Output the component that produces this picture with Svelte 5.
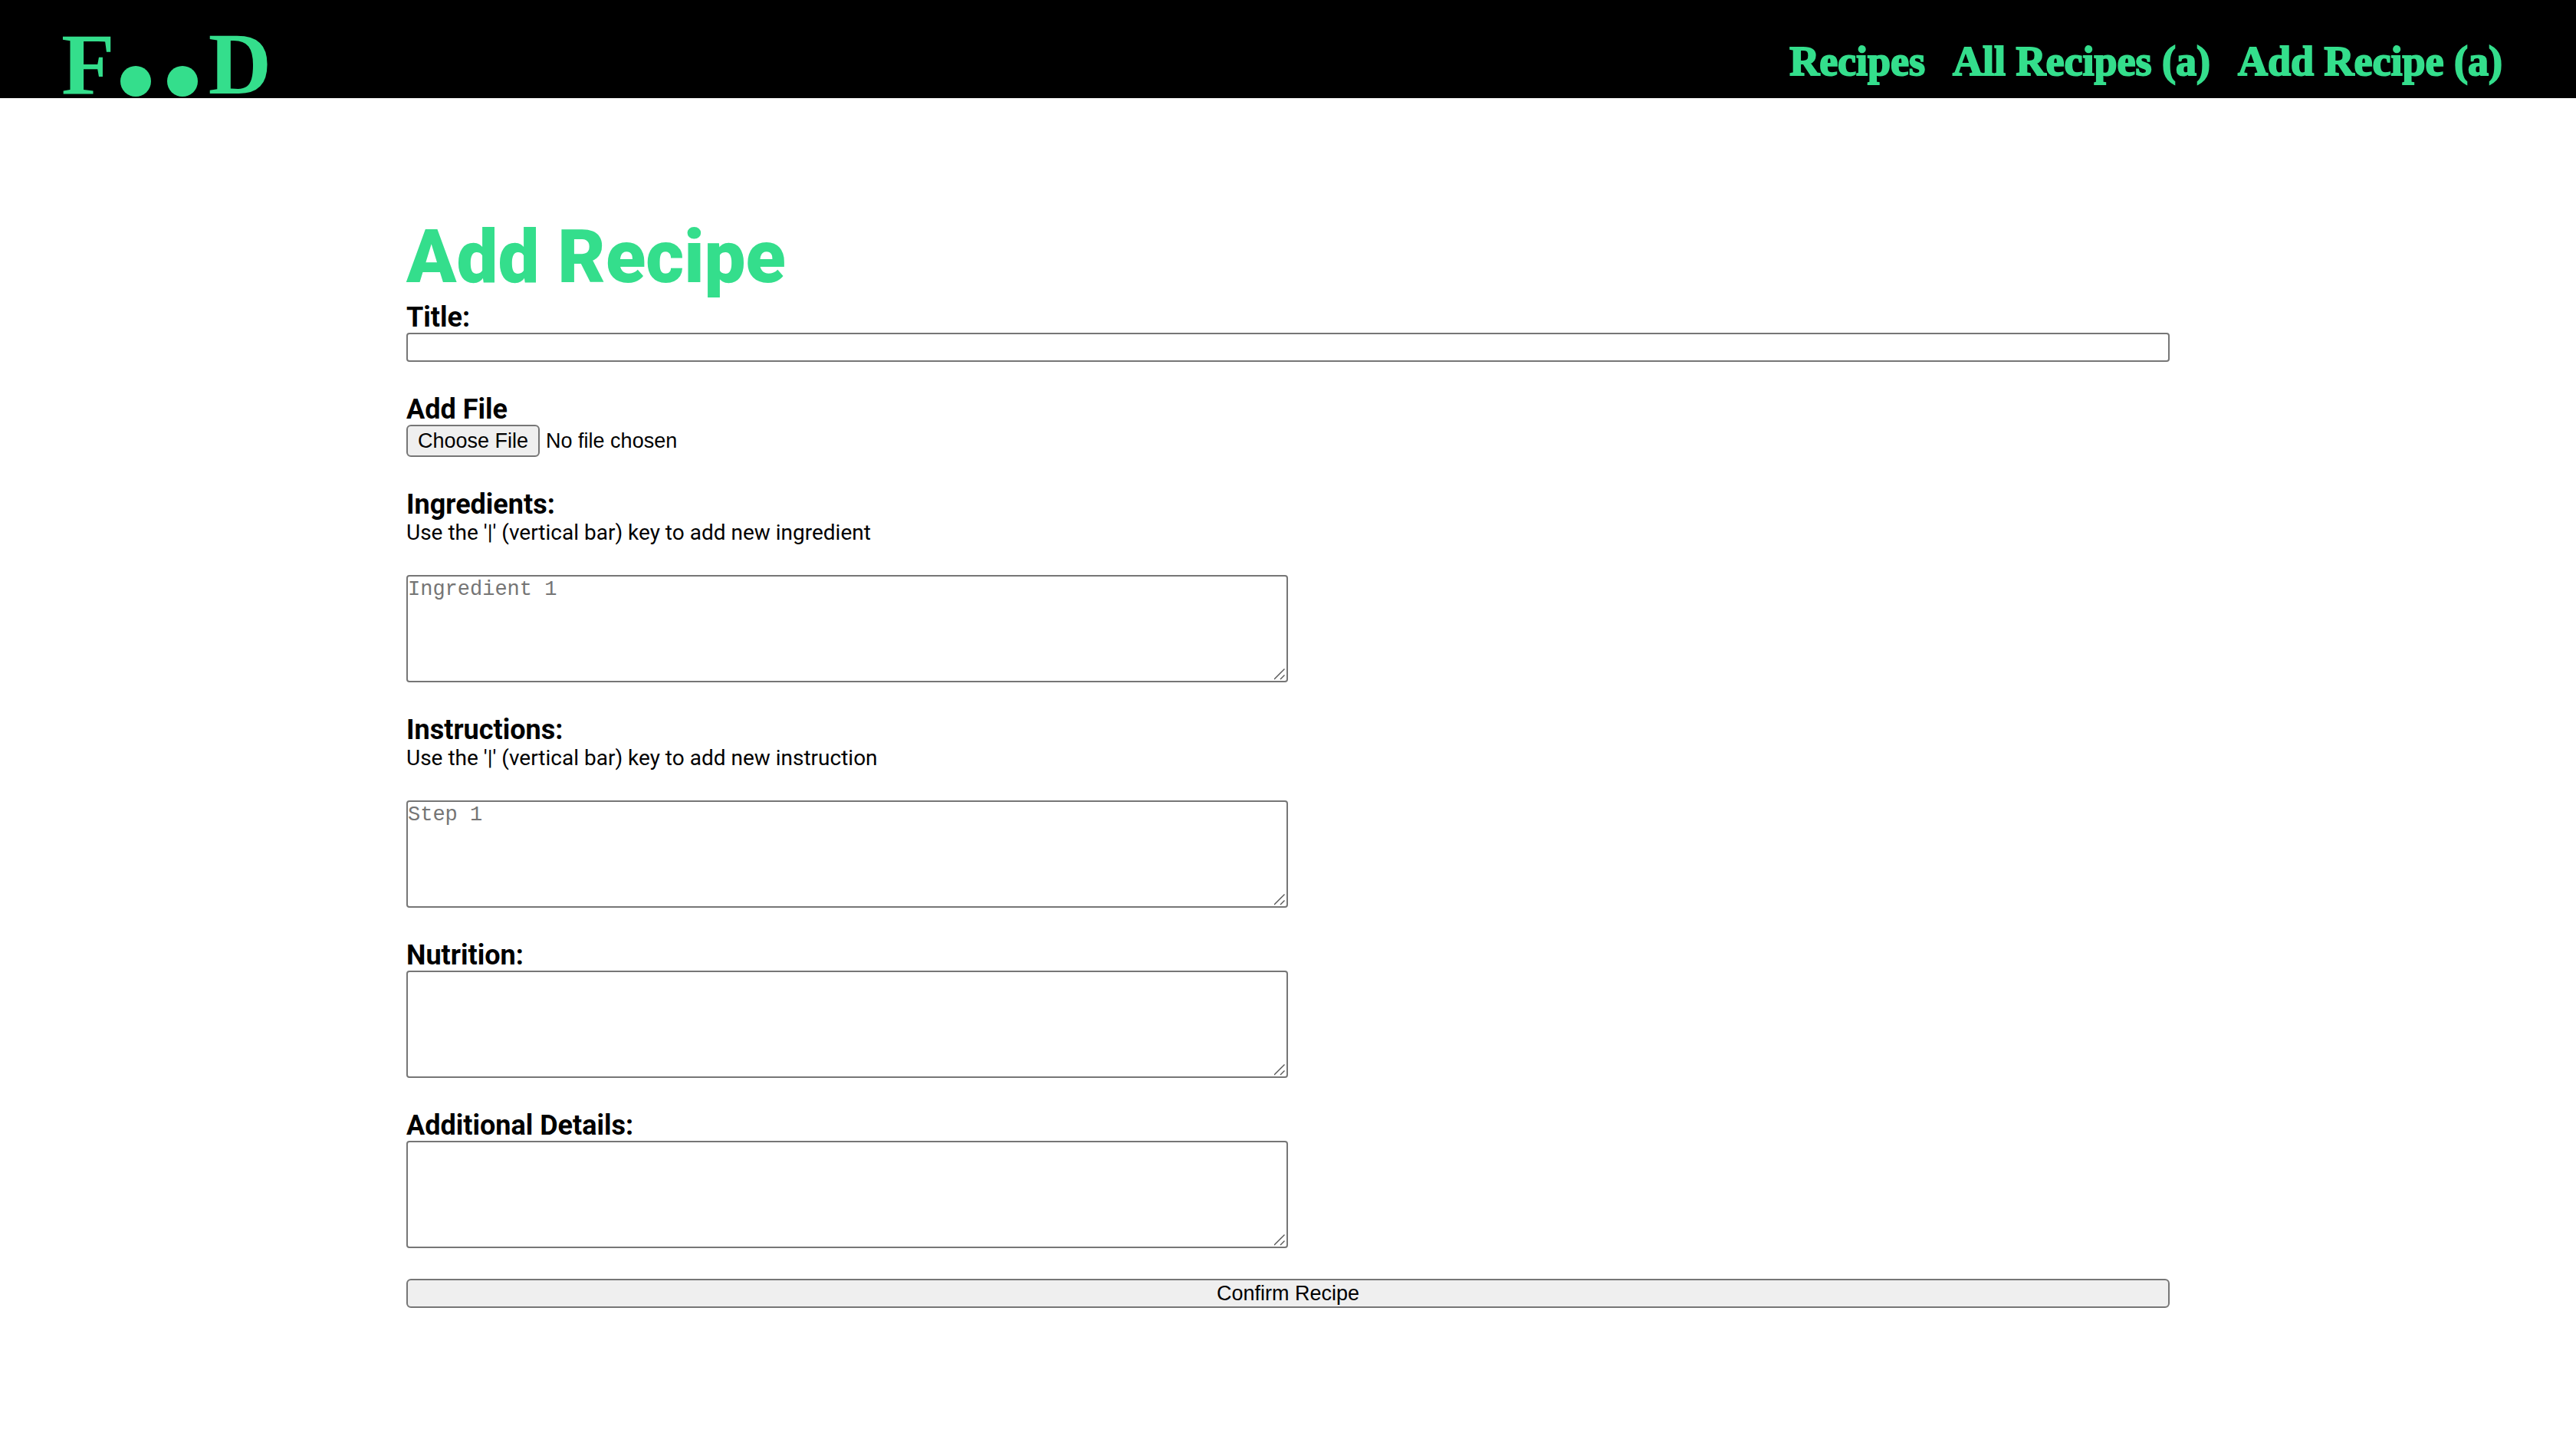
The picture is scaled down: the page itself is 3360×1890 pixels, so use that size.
<script>
  const links = ['Recipes', 'All Recipes (a)', 'Add Recipe (a)'];

  const areas = [
    {
      id: 'ingredients',
      label: 'Ingredients:',
      hint: "Use the '|' (vertical bar) key to add new ingredient",
      placeholder: 'Ingredient 1'
    },
    {
      id: 'instructions',
      label: 'Instructions:',
      hint: "Use the '|' (vertical bar) key to add new instruction",
      placeholder: 'Step 1'
    },
    { id: 'nutrition', label: 'Nutrition:' },
    { id: 'details', label: 'Additional Details:' }
  ];
</script>

<header>
  <a class="logo" href="#home" aria-label="Food">
    <span>F</span>
    <i class="dot"></i>
    <i class="dot"></i>
    <span>D</span>
  </a>
  <nav>
    {#each links as link}
      <a href="#recipes">{link}</a>
    {/each}
  </nav>
</header>

<main>
  <h1>Add Recipe</h1>
  <form onsubmit={(event) => event.preventDefault()}>
    <div class="field">
      <label for="title">Title:</label>
      <input id="title" class="text" type="text" />
    </div>

    <div class="field">
      <label for="file">Add File</label>
      <input id="file" class="file" type="file" />
    </div>

    {#each areas as area}
      <div class="field">
        <label for={area.id}>{area.label}</label>
        {#if area.hint}
          <p>{area.hint}</p>
        {/if}
        <div class="area">
          <textarea id={area.id} placeholder={area.placeholder}></textarea>
          <svg class="grip" viewBox="0 0 16 16" aria-hidden="true">
            <path d="M0 14 13.5 0.5M8 14 13.5 8.5" />
          </svg>
        </div>
      </div>
    {/each}

    <button type="submit">Confirm Recipe</button>
  </form>
</main>

<style>
  :global(body) {
    margin: 0;
    background: #fff;
    color: #000;
    font-family: Roboto, sans-serif;
  }

  header {
    display: flex;
    justify-content: space-between;
    align-items: flex-start;
    padding: 42px 96px 2px 80px;
    background: #000;
    font-family: 'Liberation Serif', serif;
    font-weight: 700;
  }

  header a {
    color: #34de8c;
    text-decoration: none;
  }

  .logo {
    display: flex;
    align-items: flex-end;
    font-size: 114px;
    line-height: 84px;
  }

  .dot {
    width: 40px;
    height: 40px;
    margin: 0 14px 0 7px;
    border-radius: 50%;
    background: #34de8c;
  }

  nav {
    display: flex;
    gap: 36px;
    font-size: 54px;
    line-height: 76px;
    -webkit-text-stroke: 2px #34de8c;
  }

  main {
    max-width: 2300px;
    margin: 0 auto;
    padding: 150px 40px;
  }

  h1 {
    margin: 0;
    color: #34de8c;
    font-size: 96px;
    line-height: 114px;
    font-weight: 900;
  }

  form {
    display: flex;
    flex-direction: column;
    gap: 40px;
  }

  .field {
    display: flex;
    flex-direction: column;
    align-items: flex-start;
  }

  label {
    padding-top: 2px;
    font-size: 36px;
    line-height: 40px;
    font-weight: 700;
  }

  p {
    margin: 0 0 38px;
    font-size: 28px;
    line-height: 34px;
  }

  input,
  button,
  textarea {
    box-sizing: border-box;
    margin: 0;
    color: #000;
    font-family: 'Liberation Sans', sans-serif;
    font-size: 27px;
  }

  .text {
    width: 100%;
    height: 38px;
    padding: 2px 4px;
    border: 2px solid #767676;
    border-radius: 4px;
    background: #fff;
  }

  .file {
    width: 100%;
    height: 42px;
    line-height: 30px;
  }

  .file::file-selector-button {
    box-sizing: border-box;
    height: 42px;
    margin: 0 8px 0 0;
    padding: 0 13px;
    border: 2px solid #767676;
    border-radius: 6px;
    background: #efefef;
    color: #000;
    font: inherit;
  }

  .area {
    position: relative;
    width: 50%;
  }

  textarea {
    display: block;
    width: 100%;
    height: 140px;
    padding: 2px 0;
    border: 2px solid #767676;
    border-radius: 4px;
    background: #fff;
    font-family: 'Liberation Mono', monospace;
    resize: none;
  }

  textarea::placeholder {
    color: #757575;
    opacity: 1;
  }

  .grip {
    position: absolute;
    right: 2px;
    bottom: 2px;
    width: 16px;
    height: 16px;
    fill: none;
    stroke: #555;
    stroke-width: 1.4;
    pointer-events: none;
  }

  button {
    height: 38px;
    padding: 0 12px;
    border: 2px solid #767676;
    border-radius: 6px;
    background: #efefef;
    line-height: 30px;
  }
</style>
